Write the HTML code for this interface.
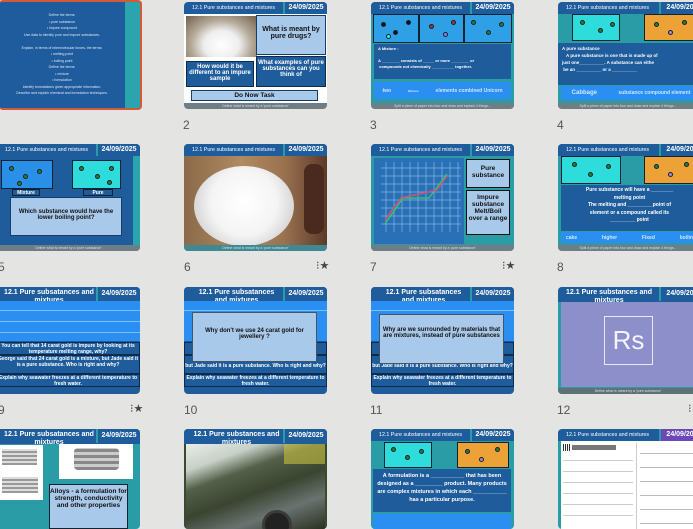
<!DOCTYPE html>
<html><head><meta charset="utf-8"><style>
*{margin:0;padding:0;box-sizing:border-box}
body{width:693px;height:519px;overflow:hidden;background:#e4e4e3;font-family:"Liberation Sans",sans-serif;position:relative}
.s{position:absolute;width:143px;height:107px;border-radius:4px;overflow:hidden;background:#2a9ca6}
.a{position:absolute}
.hd{position:absolute;left:0;top:0;height:12px;width:100%;background:#1f5c9c;color:#fff;font-size:5.3px;line-height:12px;padding-left:8px;white-space:nowrap}
.dt{position:absolute;right:0;top:0;width:44px;height:12px;background:#1f5c9c;color:#fff;font-weight:bold;font-size:7px;line-height:12px;text-align:center;border-left:2px solid #2a9ca6}
.hd.hd2{font-size:7px;font-weight:bold;line-height:7.5px;text-align:center;padding:2px 46px 0 2px;height:15px;white-space:normal;overflow:hidden}
.ft{position:absolute;left:0;bottom:0;width:100%;height:6px;background:#6e7e84;color:#dde;font-size:3.5px;line-height:6px;text-align:center}
.lb{background:#a9c9ea;color:#111;font-weight:bold;text-align:center;border:1px solid #173e66}
.db{background:#1f5c9c;color:#fff;font-weight:bold;text-align:center}
.n{position:absolute;font-size:12px;color:#555}
.st{position:absolute;font-size:11px;color:#444}
.cy{background:#2fdcdc;border:1px solid #123}
.or{background:#eca236;border:1px solid #123}
.d{position:absolute;width:5px;height:5px;border-radius:50%;background:#2e7d2a;border:1px solid #123}
.wb{position:absolute;background:#2a8ff0;color:#cfe6ff;font-weight:bold;font-size:5px;display:flex;justify-content:space-around;align-items:center}
.tb{position:absolute;left:0;top:12px;width:100%;height:45px;background:#2a8ff0}
.tr{position:absolute;left:0;width:100%;height:1px;background:#7cc0f7}
.tx{position:absolute;left:0;width:100%;background:#1f5c9c;color:#fff;font-weight:bold;font-size:5px;text-align:center;line-height:6px;border:1px solid #0c2b4d}
</style></head><body>

<!-- Row 1 -->
<div class="s" style="left:-1px;top:0;width:143px;height:110px;background:#1f5c9e;border:2px solid #d45a3c;border-left:none">
 <div class="a" style="right:0;top:0;width:15px;height:100%;background:#2aa5ad"></div>
 <div class="a" style="left:0;top:10px;width:126px;color:#dde6f2;font-size:3.5px;text-align:center;line-height:6.5px">Define the terms:<br>• pure substance<br>• impure compound<br>Use data to identify pure and impure substances.<br><br>Explain, in terms of intermolecular forces, the terms:<br>• melting point<br>• boiling point<br>Define the terms:<br>• mixture<br>• formulation<br>Identify formulations given appropriate information.<br>Describe and explain chemical and formulation techniques.</div>
</div>

<div class="s" style="left:184px;top:2px;background:#fff">
 <div class="hd">12.1 Pure substances and mixtures</div><div class="dt">24/09/2025</div>
 <div class="a" style="left:2px;top:14px;width:71px;height:41px;background:radial-gradient(ellipse at 50% 70%,#fff 0,#eee 35%,#b5aa9a 60%,#6e5e4a 100%)"></div>
 <div class="a lb" style="left:72px;top:13px;width:70px;height:40px;font-size:7px;padding-top:10px;border:1.5px solid #173e66">What is meant by pure drugs?</div>
 <div class="a db" style="left:2px;top:59px;width:68px;height:26px;font-size:6px;padding-top:2px;border:1px solid #0c2b4d">How would it be different to an impure sample</div>
 <div class="a db" style="left:72px;top:54px;width:70px;height:31px;font-size:6px;padding-top:3px;border:1px solid #0c2b4d">What examples of pure substances can you think of</div>
 <div class="a lb" style="left:7px;top:88px;width:127px;height:11px;font-size:6.5px;line-height:9px">Do Now Task</div>
 <div class="ft">Define what is meant by a 'pure substance'</div>
</div>

<div class="s" style="left:371px;top:2px">
 <div class="hd">12.1 Pure substances and mixtures</div><div class="dt">24/09/2025</div>
 <div class="a" style="left:2px;top:12px;width:46px;height:29px;background:#2fa0e6;border:1px solid #123"></div>
 <div class="a" style="left:48px;top:12px;width:45px;height:29px;background:#2fa0e6;border:1px solid #123"></div>
 <div class="a" style="left:93px;top:12px;width:48px;height:29px;background:#2fa0e6;border:1px solid #123"></div>
 <div class="d" style="left:10px;top:20px;background:#111"></div><div class="d" style="left:22px;top:28px;background:#111"></div><div class="d" style="left:35px;top:18px;background:#111"></div><div class="d" style="left:15px;top:32px;background:#2fd"></div>
 <div class="d" style="left:58px;top:22px;background:#a33"></div><div class="d" style="left:72px;top:30px;background:#97e"></div><div class="d" style="left:80px;top:18px;background:#a33"></div>
 <div class="d" style="left:100px;top:18px"></div><div class="d" style="left:115px;top:28px"></div><div class="d" style="left:128px;top:20px"></div>
 <div class="a" style="left:3px;top:42px;width:137px;height:35px;background:#1f5c9c;color:#fff;font-size:4px;font-weight:bold;padding:2px 4px;line-height:6px">A Mixture :<br><br>A ________ consists of _____ or more ________ or<br>&nbsp;compounds not chemically __________ together.</div>
 <div class="wb" style="left:3px;top:80px;width:137px;height:17px;font-size:5px">two <span style="font-size:3px">Mixture</span> elements combined Unicorn</div>
 <div class="ft">Split a piece of paper into four and draw and explain 4 things...</div>
</div>

<div class="s" style="left:558px;top:2px;width:140px">
 <div class="hd">12.1 Pure substances and mixtures</div><div class="dt" style="right:-5px">24/09/202</div>
 <div class="a cy" style="left:14px;top:12px;width:48px;height:27px"></div>
 <div class="a or" style="left:86px;top:12px;width:50px;height:27px"></div>
 <div class="d" style="left:22px;top:18px"></div><div class="d" style="left:40px;top:26px"></div><div class="d" style="left:52px;top:20px"></div>
 <div class="d" style="left:96px;top:20px"></div><div class="d" style="left:110px;top:28px;background:#a8c"></div><div class="d" style="left:124px;top:18px"></div>
 <div class="a" style="left:0;top:41px;width:140px;height:42px;background:#1f5c9c;color:#fff;font-size:4.5px;font-weight:bold;padding:2px 4px;line-height:7px">A pure substance<br><span style="padding-left:4px">A pure substance is one that is made up of</span><br>just one__________. A substance can eithe<br>&nbsp;be an __________ or a __________</div>
 <div class="wb" style="left:3px;top:84px;width:140px;height:14px"><span style="font-size:6px">Cabbage</span> substance compound element</div>
 <div class="ft">Split a piece of paper into four and draw and explain 4 things...</div>
</div>

<div class="n" style="left:183px;top:118px">2</div>
<div class="n" style="left:370px;top:118px">3</div>
<div class="n" style="left:557px;top:118px">4</div>

<!-- Row 2 -->
<div class="s" style="left:-3px;top:144px;width:143px;background:#1f5c9c">
 <div class="hd">12.1 Pure substances and mixtures</div><div class="dt">24/09/2025</div>
 <div class="a" style="left:136px;top:12px;width:7px;height:90px;background:#2aa5ad"></div>
 <div class="a" style="left:4px;top:16px;width:52px;height:29px;background:#2a8fe6;border:1px solid #123"></div>
 <div class="a cy" style="left:75px;top:16px;width:49px;height:29px"></div>
 <div class="d" style="left:12px;top:22px"></div><div class="d" style="left:26px;top:30px"></div><div class="d" style="left:40px;top:25px"></div><div class="d" style="left:20px;top:37px"></div>
 <div class="d" style="left:82px;top:22px"></div><div class="d" style="left:98px;top:30px"></div><div class="d" style="left:112px;top:22px"></div><div class="d" style="left:110px;top:36px"></div>
 <div class="a db" style="left:15px;top:45px;width:28px;height:7px;font-size:5px;line-height:6px;border:1px solid #123">Mixture</div>
 <div class="a db" style="left:86px;top:45px;width:30px;height:7px;font-size:5px;line-height:6px;border:1px solid #123">Pure</div>
 <div class="a lb" style="left:13px;top:53px;width:112px;height:39px;font-size:6px;padding-top:11px">Which substance would have the lower boiling point?</div>
 <div class="ft">Define what is meant by a 'pure substance'</div>
</div>

<div class="s" style="left:184px;top:144px;background:#6e4a2e">
 <div class="hd">12.1 Pure substances and mixtures</div><div class="dt">24/09/2025</div>
 <div class="a" style="left:0;top:12px;width:100%;height:89px;background:linear-gradient(90deg,#8a6a4a,#b08a60 40%,#9a7250 70%,#5a3a28)"></div>
 <div class="a" style="left:10px;top:22px;width:100px;height:80px;border-radius:50%;background:radial-gradient(circle at 50% 45%,#fff 0,#f4f4f4 50%,#ddd 70%,#c8c0b8 100%)"></div>
 <div class="a" style="left:120px;top:20px;width:20px;height:70px;background:#4a2a1e;border-radius:8px"></div>
 <div class="ft" style="background:#3f8a92">Define what is meant by a 'pure substance'</div>
</div>

<div class="s" style="left:371px;top:144px">
 <div class="hd">12.1 Pure substances and mixtures</div><div class="dt">24/09/2025</div>
 <div class="a" style="left:3px;top:14px;width:90px;height:86px;background:#2a70b6"></div>
 <svg class="a" style="left:10px;top:18px" width="80" height="70" viewBox="0 0 80 70">
  <g stroke="#a8d0f8" stroke-width=".5">
   <path d="M5 0V70M13 0V70M21 0V70M29 0V70M37 0V70M45 0V70M53 0V70M61 0V70M69 0V70M77 0V70M0 6H80M0 14H80M0 22H80M0 30H80M0 38H80M0 46H80M0 54H80M0 62H80"/></g>
  <path d="M4 62L22 36H48L66 12" stroke="#3c6" fill="none" stroke-width="1.2"/>
  <path d="M4 58L20 36L38 32L56 28L66 14" stroke="#c57" fill="none" stroke-width="1.5"/>
 </svg>
 <div class="a lb" style="left:95px;top:15px;width:44px;height:29px;font-size:6.5px;padding-top:5px;border:1px solid #111">Pure substance</div>
 <div class="a lb" style="left:95px;top:46px;width:44px;height:45px;font-size:6.5px;padding-top:3px;border:1px solid #111">Impure substance Melt/Boil over a range</div>
 <div class="ft">Define what is meant by a 'pure substance'</div>
</div>

<div class="s" style="left:558px;top:144px;width:140px">
 <div class="hd">12.1 Pure substances and mixtures</div><div class="dt" style="right:-5px">24/09/202</div>
 <div class="a cy" style="left:3px;top:12px;width:60px;height:28px"></div>
 <div class="a or" style="left:86px;top:12px;width:54px;height:28px"></div>
 <div class="d" style="left:14px;top:18px"></div><div class="d" style="left:30px;top:28px"></div><div class="d" style="left:48px;top:20px"></div>
 <div class="d" style="left:96px;top:20px"></div><div class="d" style="left:110px;top:28px;background:#a8c"></div><div class="d" style="left:126px;top:18px"></div>
 <div class="a db" style="left:3px;top:41px;width:137px;height:46px;font-size:5px;line-height:7.5px;padding-top:2px">Pure substance will have a ________<br>melting point<br>The melting and _________point of<br>element or a compound called its<br>_________ point</div>
 <div class="wb" style="left:3px;top:88px;width:140px;height:11px;justify-content:space-between;padding:0 5px">cake <span>higher</span> <span>Fixed</span> boiling</div>
 <div class="ft">Split a piece of paper into four and draw and explain 4 things...</div>
</div>

<div class="n" style="left:-2px;top:260px">5</div>
<div class="n" style="left:184px;top:260px">6</div><div class="st" style="left:316px;top:259px">⁝★</div>
<div class="n" style="left:370px;top:260px">7</div><div class="st" style="left:502px;top:259px">⁝★</div>
<div class="n" style="left:557px;top:260px">8</div>

<!-- Row 3 -->
<div class="s" style="left:-4px;top:287px;width:144px;background:#1f5c9c">
 <div class="hd hd2" style="padding-left:8px">12.1 Pure subsatances and mixtures</div><div class="dt" style="height:14px;line-height:14px">24/09/2025</div>
 <div class="tb" style="top:14px;height:40px"><div class="tr" style="top:9px"></div><div class="tr" style="top:20px"></div><div class="tr" style="top:31px"></div></div>
 <div class="tx" style="top:55px;height:13px">You can tell that 14 carat gold is impure by looking at its temperature melting range, why?</div>
 <div class="tx" style="top:68px;height:19px">George said that 24 carat gold is a mixture, but Jade said it is a pure substance. Who is right and why?</div>
 <div class="tx" style="top:87px;height:13px">Explain why seawater freezes at a different temperature to fresh water.</div>
</div>

<div class="s" style="left:184px;top:287px;background:#1f5c9c">
 <div class="hd hd2" style="padding-left:8px">12.1 Pure subsatances and mixtures</div><div class="dt" style="height:14px;line-height:14px">24/09/2025</div>
 <div class="tb" style="top:14px;height:40px"><div class="tr" style="top:9px"></div></div>
 <div class="tx" style="top:55px;height:13px"></div>
 <div class="tx" style="top:68px;height:19px;padding-top:7px">but Jade said it is a pure substance. Who is right and why?</div>
 <div class="tx" style="top:87px;height:13px">Explain why seawater freezes at a different temperature to fresh water.</div>
 <div class="a lb" style="left:8px;top:25px;width:125px;height:50px;font-size:6px;padding-top:15px;border:1px solid #456">Why don't we use 24 carat gold for jewellery ?</div>
</div>

<div class="s" style="left:371px;top:287px;background:#1f5c9c">
 <div class="hd hd2" style="padding-left:8px">12.1 Pure subsatances and mixtures</div><div class="dt" style="height:14px;line-height:14px">24/09/2025</div>
 <div class="tb" style="top:14px;height:40px"><div class="tr" style="top:9px"></div></div>
 <div class="tx" style="top:55px;height:13px"></div>
 <div class="tx" style="top:68px;height:19px;padding-top:7px">but Jade said it is a pure substance. Who is right and why?</div>
 <div class="tx" style="top:87px;height:13px">Explain why seawater freezes at a different temperature to fresh water.</div>
 <div class="a lb" style="left:8px;top:27px;width:125px;height:50px;font-size:6px;padding-top:12px;border:1px solid #456">Why are we surrounded by materials that are mixtures, instead of pure substances</div>
</div>

<div class="s" style="left:558px;top:287px;width:140px">
 <div class="hd hd2" style="padding-left:8px">12.1 Pure substances and mixtures</div><div class="dt" style="height:14px;line-height:14px;right:-5px">24/09/202</div>
 <div class="a" style="left:3px;top:15px;width:137px;height:85px;background:#8d8fcb"></div>
 <div class="a" style="left:46px;top:29px;width:49px;height:49px;border:1px solid #e8e8f8;color:#f4f4ff;font-size:26px;text-align:center;line-height:46px">Rs</div>
 <div class="ft" style="background:#5e7078">Define what is meant by a 'pure substance'</div>
</div>

<div class="n" style="left:-2px;top:403px">9</div><div class="st" style="left:130px;top:402px">⁝★</div>
<div class="n" style="left:184px;top:403px">10</div>
<div class="n" style="left:370px;top:403px">11</div>
<div class="n" style="left:557px;top:403px">12</div><div class="st" style="left:688px;top:402px">⁝</div>

<!-- Row 4 -->
<div class="s" style="left:-4px;top:429px;width:144px;height:100px">
 <div class="hd hd2" style="padding-left:8px">12.1 Pure subsatances and mixtures</div><div class="dt" style="height:14px;line-height:14px">24/09/2025</div>
 <div class="a" style="left:0;top:16px;width:47px;height:55px;background:#fff"></div>
 <div class="a" style="left:6px;top:20px;width:35px;height:16px;background:repeating-linear-gradient(0deg,#999 0 2px,#ddd 2px 4px)"></div>
 <div class="a" style="left:6px;top:48px;width:36px;height:16px;background:repeating-linear-gradient(0deg,#999 0 2px,#ddd 2px 4px)"></div>
 <div class="a" style="left:63px;top:15px;width:74px;height:35px;background:#fff"></div>
 <div class="a" style="left:78px;top:19px;width:45px;height:22px;background:repeating-linear-gradient(0deg,#888 0 3px,#ccc 3px 6px);border-radius:4px"></div>
 <div class="a lb" style="left:53px;top:55px;width:79px;height:45px;font-size:6.5px;padding-top:3px;border:1px solid #123">Alloys - a formulation for strength, conductivity and other properties</div>
</div>

<div class="s" style="left:184px;top:429px;height:100px;background:#3a4a2e">
 <div class="hd hd2" style="padding-left:8px">12.1 Pure substances and mixtures</div><div class="dt" style="height:14px;line-height:14px">24/09/2025</div>
 <div class="a" style="left:2px;top:15px;width:139px;height:85px;background:linear-gradient(160deg,#e8ecea 0,#c8d0c8 20%,#54604a 35%,#3a4430 55%,#6a7270 75%,#2a3020 100%)"></div>
 <div class="a" style="left:100px;top:15px;width:41px;height:20px;background:#c8c040;opacity:.6"></div>
 <div class="a" style="left:78px;top:81px;width:30px;height:30px;border-radius:50%;background:#222;border:3px solid #3a3a3a"></div>
</div>

<div class="s" style="left:371px;top:429px;height:100px">
 <div class="hd">12.1 Pure substances and mixtures</div><div class="dt">24/09/2025</div>
 <div class="a cy" style="left:13px;top:13px;width:48px;height:26px"></div>
 <div class="a or" style="left:86px;top:13px;width:52px;height:26px"></div>
 <div class="d" style="left:20px;top:18px"></div><div class="d" style="left:34px;top:26px"></div><div class="d" style="left:48px;top:20px"></div>
 <div class="d" style="left:94px;top:20px"></div><div class="d" style="left:108px;top:28px;background:#a8c"></div><div class="d" style="left:124px;top:18px"></div>
 <div class="a db" style="left:2px;top:40px;width:138px;height:43px;font-size:5.5px;line-height:8px;padding-top:3px">A formulation is a ___________ that has been designed as a _________ product. Many products are complex mixtures in which each ___________ has a particular purpose.</div>
 <div class="a" style="left:2px;top:85px;width:138px;height:15px;background:#2a8ff0"></div>
</div>

<div class="s" style="left:558px;top:429px;width:140px;height:100px;background:#fff">
 <div class="hd" style="background:#1f5c9c">12.1 Pure substances and mixtures</div><div class="dt" style="background:#6a48b8;right:-5px">24/09/202</div>
 <div class="a" style="left:0;top:12px;width:3px;height:90px;background:#2a9ca6"></div>
 <div class="a" style="left:5px;top:15px;width:7px;height:7px;background:repeating-linear-gradient(90deg,#333 0 1px,#fff 1px 2px)"></div>
 <div class="a" style="left:14px;top:16px;width:44px;height:5px;background:#777"></div>
 <div class="a" style="left:78px;top:14px;width:1px;height:90px;background:#ccc"></div>
 <div class="a" style="left:5px;top:26px;width:70px;height:70px;background:repeating-linear-gradient(180deg,#fff 0 5px,#ccc 5px 6px,#fff 6px 11px)"></div>
 <div class="a" style="left:82px;top:16px;width:56px;height:80px;background:repeating-linear-gradient(180deg,#fff 0 8px,#bbb 8px 9px,#fff 9px 14px)"></div>
</div>

</body></html>
